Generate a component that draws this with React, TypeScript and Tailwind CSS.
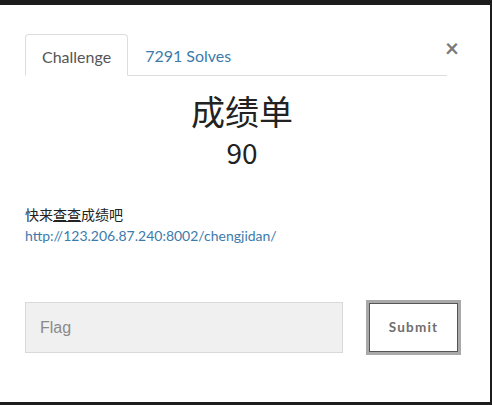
import React from "react";

export default function App() {
  return (
    <div className="w-[492px] h-[405px] bg-[#1c1c1c] overflow-hidden pt-[5px] pr-[2px] pb-[3px]">
      <div className="relative h-full w-full bg-white font-['Lato','Noto_Sans_CJK_SC',sans-serif]">
        <button className="absolute left-[445px] top-[31px] text-[24px] leading-none font-bold text-[#7a7a7a]">×</button>
        <div className="pt-[29px] pl-[25px] pr-[43px]">
          <div className="flex items-end border-b border-[#dddddd] h-[42px]">
            <div className="h-[42px] -mb-px px-[16px] pt-[4px] flex items-center border border-[#dddddd] border-b-white rounded-t-[4px] bg-white text-[16px] text-[#555555]">
              Challenge
            </div>
            <div className="h-[42px] px-[17px] pt-[4px] flex items-center text-[16px] text-[#3c7bab]">
              7291 Solves
            </div>
          </div>
        </div>
        <div className="flex flex-col items-center mt-[15px] pl-[25px] pr-[31px] text-[#222]">
          <div className="text-[34px] leading-[40px] font-['Noto_Sans_CJK_SC',sans-serif]">成绩单</div>
          <div className="text-[28px] leading-[34px] mt-[4px] font-['Noto_Sans_CJK_SC',sans-serif]">90</div>
        </div>
        <div className="pl-[25px] mt-[34px] text-[14px] leading-[22px]">
          <div className="text-[#222] font-['Noto_Sans_CJK_SC',sans-serif] text-[14px]">
            快来<span className="underline">查查</span>成绩吧
          </div>
          <div className="text-[#3c7bab]">http://123.206.87.240:8002/chengjidan/</div>
        </div>
        <div className="flex items-center pl-[25px] mt-[53px] gap-[23px]">
          <div className="w-[318px] h-[51px] bg-[#f0f0f0] border border-[#d9d9d9] flex items-center pl-[14px] text-[16px] text-[#8a8a8a] font-['Liberation_Sans',sans-serif]">
            Flag
          </div>
          <div className="w-[95px] h-[55px] border-[3px] border-[#a9a9a9] flex">
            <div className="flex-1 border border-[#555] bg-white flex items-center justify-center text-[13.5px] font-bold tracking-[1.2px] text-[#6f6f6f]">
              Submit
            </div>
          </div>
        </div>
      </div>
    </div>
  );
}
